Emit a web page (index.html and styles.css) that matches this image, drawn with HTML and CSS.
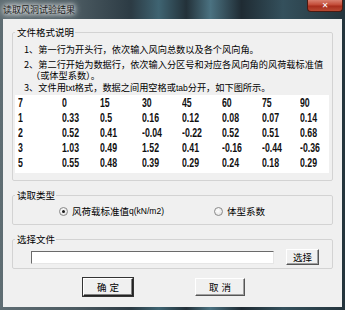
FILE: index.html
```html
<!DOCTYPE html>
<html>
<head>
    <meta charset="utf-8" />
    <link rel="stylesheet" href="styles.css">
    <title>读取风洞试验结果</title>
</head>
<body>
    <div class="window">
        <div class="titlebar">
            <span class="title">读取风洞试验结果</span>
            <span class="close">&#x2715;</span>
        </div>
        <div class="client">
            <fieldset class="group group-format">
                <legend>文件格式说明</legend>
                <p class="first">1、第一行为开头行，依次输入风向总数以及各个风向角。</p>
                <p>2、第二行开始为数据行，依次输入分区号和对应各风向角的风荷载标准值<span class="cont">（或体型系数）。</span></p>
                <p class="last">3、文件用<span class="latin">txt</span>格式，数据之间用空格或<span class="latin">tab</span>分开，如下图所示。</p>
                <div class="sample">
                    <span>7</span><span>0</span><span>15</span><span>30</span><span>45</span><span>60</span><span>75</span><span>90</span>
                    <span>1</span><span>0.33</span><span>0.5</span><span>0.16</span><span>0.12</span><span>0.08</span><span>0.07</span><span>0.14</span>
                    <span>2</span><span>0.52</span><span>0.41</span><span>-0.04</span><span>-0.22</span><span>0.52</span><span>0.51</span><span>0.68</span>
                    <span>3</span><span>1.03</span><span>0.49</span><span>1.52</span><span>0.41</span><span>-0.16</span><span>-0.44</span><span>-0.36</span>
                    <span>5</span><span>0.55</span><span>0.48</span><span>0.39</span><span>0.29</span><span>0.24</span><span>0.18</span><span>0.29</span>
                </div>
            </fieldset>

            <fieldset class="group group-type">
                <legend>读取类型</legend>
                <div class="radios">
                    <label class="radio"><span class="dot checked"></span>风荷载标准值<span class="latin">q(kN/m2)</span></label>
                    <label class="radio"><span class="dot"></span>体型系数</label>
                </div>
            </fieldset>

            <fieldset class="group group-file">
                <legend>选择文件</legend>
                <div class="file-row">
                    <input type="text" class="file-input" />
                    <button type="button" class="button small">选择</button>
                </div>
            </fieldset>

            <div class="actions">
                <button type="button" class="button default">确定</button>
                <button type="button" class="button">取消</button>
            </div>
        </div>
    </div>
</body>
</html>
```

FILE: styles.css
```css
* {
    box-sizing: border-box;
}
body {
    margin: 0;
    font-family: "Noto Sans CJK SC", "Liberation Sans", sans-serif;
    font-size: 9.5px;
    color: #000;
}
.window {
    width: 345px;
    height: 310px;
    overflow: hidden;
    background: linear-gradient(90deg, #5f6d73 0%, #4b5a61 22%, #2c3b44 38%, #3f6472 46%, #233139 54%, #4b7281 61%, #1f2b33 70%, #34505c 82%, #24343c 100%);
}
.titlebar {
    height: 19px;
    display: flex;
    justify-content: space-between;
    align-items: flex-start;
    padding: 0 2px 0 3px;
}
.title {
    margin-top: 4px;
    font-size: 9px;
    line-height: 11px;
    color: #1c1c1c;
    text-shadow: 0 0 4px #fff, 0 0 6px #fff, 0 0 8px #e8e8e8;
}
.close {
    width: 36px;
    height: 12px;
    display: flex;
    justify-content: center;
    align-items: center;
    font-family: "DejaVu Sans", sans-serif;
    font-size: 8px;
    font-weight: bold;
    color: #fff;
    background: linear-gradient(#d9806f, #c24a36 45%, #a82d1c 55%, #b94a33);
    border: 1px solid #4a1a12;
    border-top: none;
    border-radius: 0 0 4px 4px;
}
.client {
    margin-left: 3px;
    width: 339px;
    height: 288px;
    background: #f0f0f0;
    padding: 7px 9px 0 9px;
}
.group {
    margin: 0;
    padding: 0 2px 0 2px;
    border: 1px solid #d3d3d3;
    border-radius: 2px;
}
.group legend {
    padding: 0 1px 0 2px;
    line-height: 12px;
}
.group + .group {
    margin-top: 8px;
}
.group-format p {
    margin: 3px 0 0 9px;
    font-size: 9.2px;
    line-height: 11.5px;
    white-space: nowrap;
}
.group-format p.first {
    margin-top: 6px;
}
.group-format p.last {
    margin-top: 0;
}
.cont {
    display: block;
    margin-left: 7px;
}
.latin {
    font-family: "Liberation Sans", sans-serif;
    font-size: 8.5px;
}
.sample {
    margin: 1px 1px 7px 0;
    height: 78px;
    background: #fff;
    padding: 1px 0 0 3px;
    display: grid;
    grid-template-columns: 44px 38px 42px 40px 40px 40px 38px auto;
    grid-auto-rows: 15px;
    font-family: "Liberation Sans", sans-serif;
    font-weight: bold;
    font-size: 12.5px;
    line-height: 15px;
    color: #111;
}
.sample span {
    transform: scaleX(0.7);
    transform-origin: left center;
    white-space: nowrap;
}
.group-type {
    height: 36px;
}
.radios {
    display: grid;
    grid-template-columns: 155px auto;
    margin: 4px 0 0 44px;
    line-height: 12px;
}
.radio {
    display: flex;
    align-items: center;
}
.dot {
    width: 9px;
    height: 9px;
    margin-right: 4px;
    border-radius: 50%;
    border: 1px solid #8a8a8a;
    background: radial-gradient(circle at 40% 40%, #fff, #dcdcdc);
    display: flex;
    justify-content: center;
    align-items: center;
}
.dot.checked::after {
    content: "";
    width: 3px;
    height: 3px;
    border-radius: 50%;
    background: #1a1a1a;
}
.group-file {
    height: 36px;
}
.file-row {
    display: flex;
    align-items: center;
    margin: 4px 0 0 16px;
}
.file-input {
    width: 243px;
    height: 13px;
    padding: 0;
    background: #fff;
    border: 1px solid;
    border-color: #6a6a6a #e6e6e6 #e6e6e6 #6a6a6a;
    outline: none;
}
.button {
    font-family: "Noto Sans CJK SC", sans-serif;
    font-size: 9.5px;
    line-height: 12px;
    padding: 0;
    color: #000;
    background: #f0f0f0;
    border: 1px solid;
    border-color: #fff #555 #555 #fff;
    box-shadow: inset -1px -1px 0 #a0a0a0;
}
.button.small {
    width: 33px;
    height: 16px;
    margin-left: 12px;
}
.actions {
    display: flex;
    gap: 62px;
    margin: 9px 0 0 71px;
}
.actions .button {
    width: 50px;
    height: 18px;
    letter-spacing: 3px;
    padding-left: 3px;
}
.actions .button.default {
    border-color: #fff #222 #222 #fff;
    box-shadow: inset -1px -1px 0 #808080, 0 0 0 1px #333;
}
```
